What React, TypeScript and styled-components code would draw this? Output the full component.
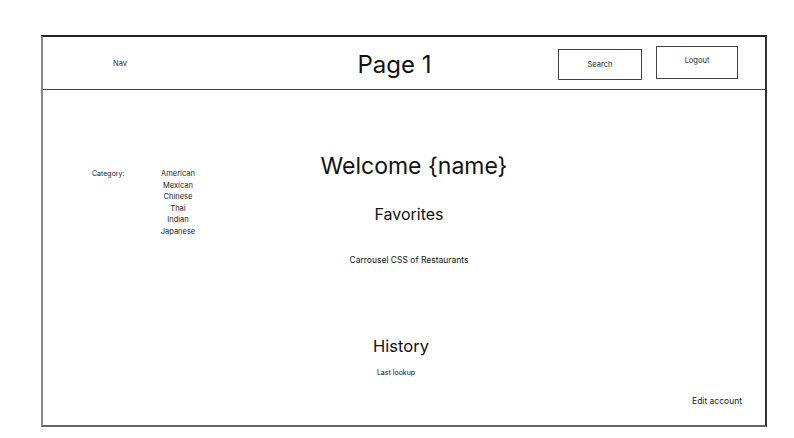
import React from "react";
import styled, { createGlobalStyle } from "styled-components";

const Global = createGlobalStyle`
  html, body { margin: 0; padding: 0; background: #fff; }
  body { font-family: Inter, "Noto Sans", Roboto, sans-serif; color: #111; }
`;

const Frame = styled.div`
  box-sizing: border-box;
  margin: 35px 0 0 41px;
  width: 726px;
  height: 392px;
  border-top: 2px solid #222;
  border-right: 2px solid #333;
  border-bottom: 2px solid #666;
  border-left: 2px solid #888;
  display: flex;
  flex-direction: column;
`;

const Header = styled.header`
  box-sizing: border-box;
  height: 53px;
  border-bottom: 1.5px solid #444;
  display: flex;
  align-items: center;
  padding: 0 27px 0 70px;
`;

const NavLabel = styled.div`
  font-size: 7.5px;
  color: #333;
  width: 200px;
`;

const PageTitle = styled.h1`
  flex: 1;
  margin: 2px 0 0;
  font-size: 24px;
  font-weight: 400;
  text-align: center;
  padding-right: 82px;
`;

const Actions = styled.div`
  display: flex;
  align-items: center;
  gap: 14px;
`;

const Button = styled.button<{ $w: number; $h: number; $dy: number }>`
  box-sizing: border-box;
  width: ${(p) => p.$w}px;
  height: ${(p) => p.$h}px;
  margin-top: ${(p) => p.$dy}px;
  background: #fff;
  border: 1.5px solid #444;
  font-family: Inter, "Noto Sans", sans-serif;
  font-size: 7.5px;
  color: #222;
  padding: 0 0 ${(p) => (p.$dy < 0 ? 4 : 0)}px;
`;

const Body = styled.main`
  flex: 1;
  display: flex;
  position: relative;
`;

const Sidebar = styled.aside`
  width: 200px;
  display: flex;
  align-items: flex-start;
  padding: 78px 0 0 49px;
  box-sizing: border-box;
  font-size: 7.5px;
  color: #222;
`;

const CategoryLabel = styled.div`
  width: 56px;
  font-size: 7px;
  line-height: 11px;
`;

const CategoryList = styled.ul`
  list-style: none;
  margin: 0;
  padding: 0;
  width: 60px;
  text-align: center;
  line-height: 11.6px;
`;

const Main = styled.section`
  flex: 1;
  display: flex;
  flex-direction: column;
  align-items: center;
  padding-right: 198px;
`;

const Heading = styled.div<{ $size: number; $top: number; $dx: number }>`
  font-size: ${(p) => p.$size}px;
  margin-top: ${(p) => p.$top}px;
  margin-left: ${(p) => p.$dx}px;
  line-height: 1.2;
  color: #111;
`;

const Footer = styled.div`
  position: absolute;
  right: 23px;
  bottom: 19px;
  font-size: 8.5px;
  color: #222;
`;

const categories = ["American", "Mexican", "Chinese", "Thai", "Indian", "Japanese"];

export default function App() {
  return (
    <>
      <Global />
      <Frame>
        <Header>
          <NavLabel>Nav</NavLabel>
          <PageTitle>Page 1</PageTitle>
          <Actions>
            <Button $w={84} $h={31} $dy={3}>Search</Button>
            <Button $w={82} $h={33} $dy={-2}>Logout</Button>
          </Actions>
        </Header>
        <Body>
          <Sidebar>
            <CategoryLabel>Category:</CategoryLabel>
            <CategoryList>
              {categories.map((c) => (
                <li key={c}>{c}</li>
              ))}
            </CategoryList>
          </Sidebar>
          <Main>
            <Heading $size={23} $top={63} $dx={18}>Welcome {"{name}"}</Heading>
            <Heading $size={16} $top={24} $dx={8}>Favorites</Heading>
            <Heading $size={8.5} $top={31.3} $dx={8}>Carrousel CSS of Restaurants</Heading>
            <Heading $size={16.5} $top={72} $dx={-8}>History</Heading>
            <Heading $size={7} $top={11.5} $dx={-18}>Last lookup</Heading>
          </Main>
          <Footer>Edit account</Footer>
        </Body>
      </Frame>
    </>
  );
}
